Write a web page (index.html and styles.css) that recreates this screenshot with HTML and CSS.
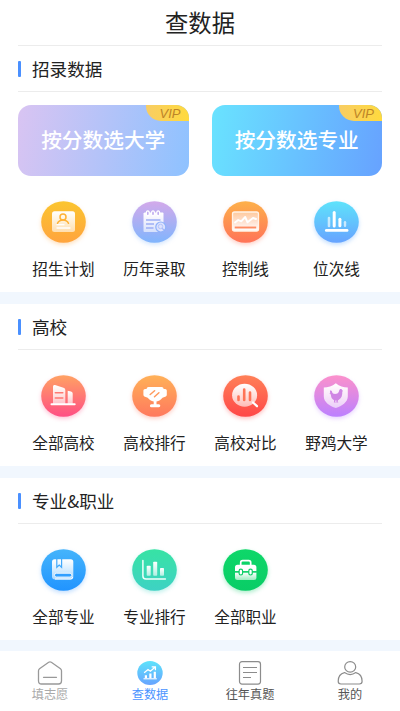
FILE: index.html
```html
<!DOCTYPE html>
<html lang="zh-CN">
<head>
<meta charset="utf-8">
<title>查数据</title>
<link rel="stylesheet" href="styles.css">
</head>
<body>
<svg class="defs" width="0" height="0" aria-hidden="true">
  <defs>
    <linearGradient id="yellow" x2="0" y2="1"><stop stop-color="#fbc52f"/><stop offset="1" stop-color="#ffa43e"/></linearGradient>
    <linearGradient id="violet" x2="0" y2="1"><stop stop-color="#d3a9ea"/><stop offset="1" stop-color="#80b5fd"/></linearGradient>
    <linearGradient id="orange" x2="0" y2="1"><stop stop-color="#fdb04a"/><stop offset="1" stop-color="#ff7358"/></linearGradient>
    <linearGradient id="sky" x2="0" y2="1"><stop stop-color="#5ee3fb"/><stop offset="1" stop-color="#67a3ff"/></linearGradient>
    <linearGradient id="pink" x2="0" y2="1"><stop stop-color="#ffa263"/><stop offset="1" stop-color="#ff4e84"/></linearGradient>
    <linearGradient id="peach" x2="0" y2="1"><stop stop-color="#ffb158"/><stop offset="1" stop-color="#ff795e"/></linearGradient>
    <linearGradient id="red" x2="0" y2="1"><stop stop-color="#ff8057"/><stop offset="1" stop-color="#ff4748"/></linearGradient>
    <linearGradient id="purple" x2="0" y2="1"><stop stop-color="#fc91cb"/><stop offset="1" stop-color="#bc80ff"/></linearGradient>
    <linearGradient id="blue" x2="0" y2="1"><stop stop-color="#45b4fb"/><stop offset="1" stop-color="#2194ff"/></linearGradient>
    <linearGradient id="teal" x2="0" y2="1"><stop stop-color="#37e3a4"/><stop offset="1" stop-color="#3ed2c4"/></linearGradient>
    <linearGradient id="green" x2="0" y2="1"><stop stop-color="#0ed769"/><stop offset="1" stop-color="#09cd66"/></linearGradient>
    <linearGradient id="glass" x2="0" y2="1"><stop stop-color="#fff"/><stop offset="1" stop-color="#fff" stop-opacity=".6"/></linearGradient>
    <linearGradient id="glassUp" x2="0" y2="1"><stop stop-color="#fff" stop-opacity=".45"/><stop offset="1" stop-color="#fff"/></linearGradient>
  </defs>
</svg>

<header class="header"><h1>查数据</h1></header>

<main>
  <section class="section">
    <h2 class="section-title">招录数据</h2>
    <div class="banners">
      <a class="banner banner-college"><span>按分数选大学</span><span class="vip">VIP</span></a>
      <a class="banner banner-major"><span>按分数选专业</span><span class="vip">VIP</span></a>
    </div>
    <div class="grid">
      <a class="item">
        <svg class="icon glow-yellow" viewBox="0 0 45 42">
          <ellipse cx="22.5" cy="21" rx="22.3" ry="20.8" fill="url(#yellow)"/>
          <rect x="11" y="10.3" width="23" height="20.7" rx="2.5" fill="url(#glass)"/>
          <g fill="none" stroke="#ffb236" stroke-width="1.5" stroke-linecap="round"><circle cx="22" cy="16" r="3"/><path d="M16.5 22.3c1-2 3-3.3 5.500-3.300s4.500 1.300 5.500 3.300"/></g>
          <path d="M16 23.700h7M16 27h13" stroke="#fff" stroke-width="1.300" stroke-linecap="round"/>
        </svg>
        <span>招生计划</span>
      </a>
      <a class="item">
        <svg class="icon glow-violet" viewBox="0 0 45 42">
          <ellipse cx="22.5" cy="21" rx="22.3" ry="20.800" fill="url(#violet)"/>
          <path d="M12.500 11.500h18a1 1 0 0 1 1 1V31h-19a1 1 0 0 1-1-1V12.500z" fill="url(#glass)"/>
          <g fill="#c1adef" stroke="#fff" stroke-width="1.200"><ellipse cx="15.800" cy="12.300" rx="1.500" ry="2.500"/><ellipse cx="21" cy="12.300" rx="1.500" ry="2.500"/><ellipse cx="26.200" cy="12.300" rx="1.500" ry="2.500"/></g>
          <path d="M14 19h14.500M14 23h8M14 27h7.500" stroke="#9daff5" stroke-width="1.400"/>
          <circle cx="28.800" cy="26" r="5" fill="#dde2fd" stroke="#8fb1fa" stroke-width="1.200"/>
          <circle cx="28.500" cy="25.500" r="2.200" fill="none" stroke="#b4c4fa"/>
          <path d="M30.200 27.300l1.600 1.600" stroke="#9bb3f8" stroke-width="1.200"/>
        </svg>
        <span>历年录取</span>
      </a>
      <a class="item">
        <svg class="icon glow-orange" viewBox="0 0 45 42">
          <ellipse cx="22.500" cy="21" rx="22.300" ry="20.800" fill="url(#orange)"/>
          <rect x="9.500" y="11" width="26" height="19" rx="2" fill="url(#glassUp)" stroke="#fff3e9" stroke-width="1.300"/>
          <path d="M12 21.500l3.200-2.500 3 1.300 4-4.300 2.300 5.300 5.500-4.300 3 1" fill="none" stroke="#fff" stroke-width="1.900" stroke-linejoin="round" stroke-linecap="round"/>
          <path d="M11.700 26.500h21.500" stroke="#ff8c62" stroke-width="1.900"/>
        </svg>
        <span>控制线</span>
      </a>
      <a class="item">
        <svg class="icon glow-blue" viewBox="0 0 45 42">
          <ellipse cx="22.500" cy="21" rx="22.300" ry="20.800" fill="url(#sky)"/>
          <g fill="none" stroke="#fff" stroke-linecap="round"><path d="M15 17v8" stroke-width="2.600" opacity=".65"/><path d="M20.200 11.500V25" stroke-width="3"/><path d="M25.900 18.300v6.500" stroke-width="3"/><path d="M31 21.300v3.500" stroke-width="2.400" opacity=".65"/><path d="M12.300 29.400h20.800" stroke-width="2.700"/></g>
        </svg>
        <span>位次线</span>
      </a>
    </div>
  </section>

  <section class="section">
    <h2 class="section-title">高校</h2>
    <div class="grid">
      <a class="item">
        <svg class="icon glow-pink" viewBox="0 0 45 42">
          <ellipse cx="22.500" cy="21" rx="22.300" ry="20.800" fill="url(#pink)"/>
          <path d="M12 29V11.500q0-2 2-1.500l8.500 2.800q1.800.600 1.800 2.200v14z" fill="url(#glass)"/>
          <path d="M26.700 29V15.800l3.300.800q1.700.400 1.700 2V29z" fill="url(#glass)"/>
          <path d="M14.300 17.700h7.500M14.300 23h7.500" stroke="#ff7a72" stroke-width="1.500" stroke-linecap="round"/>
          <path d="M10.500 29.200h23.200" stroke="#fff" stroke-width="2" stroke-linecap="round"/>
        </svg>
        <span>全部高校</span>
      </a>
      <a class="item">
        <svg class="icon glow-orange" viewBox="0 0 45 42">
          <ellipse cx="22.500" cy="21" rx="22.300" ry="20.800" fill="url(#peach)"/>
          <path d="M16.500 12h13.200q1.700 0 2 1.900h1.400q1.700 0 1.700 1.700v4.200q0 1.200-1 1.600l-3.300 1.300c-1.500 2-3.500 3.200-6 3.800v2.700h2.300a1.500 1.500 0 0 1 0 3h-7.400a1.500 1.500 0 0 1 0-3h2.300v-2.700c-2.500-.6-4.500-1.800-6-3.800l-3.300-1.300q-1-.4-1-1.600v-4.200q0-1.700 1.700-1.700h1.400q.3-1.900 2-1.900z" fill="#fff"/>
          <path d="M18.200 19.500l4.400-3.700M22.500 21.800l4.400-4" stroke="#ff9a5d" stroke-width="1.500" stroke-linecap="round"/>
        </svg>
        <span>高校排行</span>
      </a>
      <a class="item">
        <svg class="icon glow-red" viewBox="0 0 45 42">
          <ellipse cx="22.500" cy="21" rx="22.300" ry="20.800" fill="url(#red)"/>
          <ellipse cx="21.600" cy="20.200" rx="12.500" ry="11.500" fill="url(#glass)"/>
          <path d="M30 27.500l4 3.700" stroke="#fff" stroke-width="2.300" stroke-linecap="round"/>
          <path d="M15.500 21.500V25M21.200 14.500V25M27 17.500V25" stroke="#ff7457" stroke-width="2.600" stroke-linecap="round"/>
        </svg>
        <span>高校对比</span>
      </a>
      <a class="item">
        <svg class="icon glow-purple" viewBox="0 0 45 42">
          <ellipse cx="22.500" cy="21" rx="22.300" ry="20.800" fill="url(#purple)"/>
          <path d="M21.800 8.300c3.700 3 7.700 4 12 4.200v9c0 5.500-6 9.800-12 11.500-6-1.700-12-6-12-11.500v-9c4.300-.2 8.300-1.200 12-4.200z" fill="url(#glass)"/>
          <path d="M15.900 15.700c1.200-.3 2 .2 2.200 1.400.2 1.300 1.200 1.900 3 1.900 1.900 0 3-.7 3.700-2.200.4-1 .3-2 .9-2.400.9-.8 2.300-.3 2.500.9l1 .6-.9.700c.2 3.600-.7 6.700-3.400 8.200l-.9.500-.3 1.500.8.700h-2.300l.4-2.100h-1.400l.1 1.500.9.700h-2.300l.2-2.400c-2-.8-3-2.500-3.100-4.600l-.6-1.800-1-.3.8-.8z" fill="#cf86e4"/>
        </svg>
        <span>野鸡大学</span>
      </a>
    </div>
  </section>

  <section class="section">
    <h2 class="section-title">专业&amp;职业</h2>
    <div class="grid">
      <a class="item">
        <svg class="icon glow-blue" viewBox="0 0 45 42">
          <ellipse cx="22.500" cy="21" rx="22.300" ry="20.800" fill="url(#blue)"/>
          <path d="M13.500 10.300h16.300q2.500 0 2.500 2.500V28q0 2.500-2.500 2.500H14q-3 0-3-3V12.800q0-2.500 2.500-2.500z" fill="url(#glass)"/>
          <path d="M15.800 10v8.300l2.400-2.200 2.400 2.200V10" fill="none" stroke="#42a9fb" stroke-width="1.200"/>
          <rect x="13.500" y="24.300" width="17.300" height="3.700" rx="1.800" fill="#309fff" stroke="#fff" stroke-width=".800"/>
          <path d="M14 30h15.500q2 0 2.200-2" fill="none" stroke="#fff" stroke-width="1"/>
        </svg>
        <span>全部专业</span>
      </a>
      <a class="item">
        <svg class="icon glow-teal" viewBox="0 0 45 42">
          <ellipse cx="22.500" cy="21" rx="22.300" ry="20.800" fill="url(#teal)"/>
          <path d="M10.900 11.500V27q0 3 3 3h19.500" fill="none" stroke="#f0fffb" stroke-width="1.500" stroke-linecap="round"/>
          <rect x="14.700" y="16.800" width="4" height="10" rx=".8" fill="url(#glass)"/><rect x="21.200" y="12.800" width="4" height="14" rx=".8" fill="url(#glass)"/><rect x="28" y="19" width="4" height="7.800" rx=".8" fill="url(#glass)"/>
        </svg>
        <span>专业排行</span>
      </a>
      <a class="item">
        <svg class="icon glow-green" viewBox="0 0 45 42">
          <ellipse cx="22.500" cy="21" rx="22.300" ry="20.800" fill="url(#green)"/>
          <path d="M17.700 16v-2.300q0-2 2-2h6q2 0 2 2V16" fill="none" stroke="#fff" stroke-width="1.700"/>
          <path d="M14.500 15.700h16.400q2.500 0 2.500 2.500v4H12v-4q0-2.500 2.500-2.500z" fill="#fff"/>
          <path d="M12 23.500h21.400v5q0 2.500-2.500 2.500H14.500q-2.500 0-2.500-2.500z" fill="url(#glass)"/>
          <path d="M12 22.800h21.400" stroke="#0ccf67" stroke-width="1.200"/>
          <g fill="#fff" stroke="#0ccf67" stroke-width="1.200"><rect x="16.100" y="20.200" width="3.500" height="5.800" rx="1.700"/><rect x="25.800" y="20.200" width="3.500" height="5.800" rx="1.700"/></g>
        </svg>
        <span>全部职业</span>
      </a>
    </div>
  </section>
</main>

<nav class="tabs">
  <a class="tab tab-light">
    <svg class="tab-icon" viewBox="0 0 26 26"><path d="M11.700 2.300q1.300-.9 2.600 0l9.200 6.400q1 .8 1 2V21q0 3-3 3h-17q-3 0-3-3V10.700q0-1.200 1-2zM6.500 17.300h13" fill="none" stroke="#999" stroke-width="1.300" stroke-linecap="round"/></svg>
    <span>填志愿</span>
  </a>
  <a class="tab tab-active">
    <svg class="tab-icon" viewBox="0 0 26 26"><ellipse cx="13" cy="13" rx="12.700" ry="12" fill="url(#sky)"/><path d="M7.200 12.700l3.800-3.200 2.400 1.700 4.500-3.900M14.700 6.800h3.700v3.400" fill="none" stroke="#fff" stroke-width="1.300"/><path d="M8.900 15.200v3M13.400 13.500v4.700M17.800 11.700v6.500" stroke="#fff" stroke-width="2.200"/><path d="M6.500 18.800h13.300" stroke="#fff" stroke-width="1.100"/></svg>
    <span>查数据</span>
  </a>
  <a class="tab">
    <svg class="tab-icon" viewBox="0 0 26 26"><rect x="2.500" y="1.700" width="21" height="22.400" rx="2.500" fill="none" stroke="#8c8c8c" stroke-width="1.200"/><path d="M6 7.500h14M6 12.500h14M6 17.500h8" stroke="#8c8c8c" stroke-width="1.200"/></svg>
    <span>往年真题</span>
  </a>
  <a class="tab">
    <svg class="tab-icon" viewBox="0 0 26 26"><g fill="none" stroke="#8c8c8c" stroke-width="1.200"><ellipse cx="13.200" cy="6.900" rx="5.500" ry="5.300"/><path d="M7.500 12.600Q1.200 14 1.200 21.300q0 2.700 2.700 2.700h18.500q2.700 0 2.700-2.700 0-7.300-6.300-8.700-5.600 4-11.300 0z"/></g></svg>
    <span>我的</span>
  </a>
</nav>
</body>
</html>
```
FILE: styles.css
```css
* {
  box-sizing: border-box;
}

body {
  margin: 0;
  width: 400px;
  height: 711px;
  overflow: hidden;
  display: flex;
  flex-direction: column;
  background: #fff;
  color: #222;
  font-family: "Noto Sans CJK SC", sans-serif;
}

.defs {
  position: absolute;
}

.header {
  height: 46px;
  flex: none;
  margin: 0 18px;
  border-bottom: 1px solid #ececec;
  display: flex;
  justify-content: center;
}

.header h1 {
  margin: 0;
  font-size: 23.3px;
  font-weight: 400;
  line-height: 44px;
}

.section {
  padding: 0 18px;
  height: 174px;
  border-bottom: 12px solid #f1f7fe;
}

.section:first-child {
  height: 258px;
}

.section:last-child {
  height: 173px;
  border-bottom-width: 11px;
}

.section-title {
  display: flex;
  align-items: center;
  gap: 11px;
  height: 46px;
  margin: 0;
  border-bottom: 1px solid #ececec;
  font-size: 17.6px;
  font-weight: 400;
}

.section-title::before {
  content: "";
  width: 3px;
  height: 16px;
  border-radius: 1px;
  background: #4a90ff;
}

.banners {
  display: grid;
  grid-template-columns: 1fr 1fr;
  gap: 23px;
  padding-top: 13px;
}

.banner {
  position: relative;
  display: flex;
  align-items: center;
  justify-content: center;
  height: 71px;
  padding-bottom: 3px;
  border-radius: 13px;
  overflow: hidden;
  color: #fff;
  font-size: 20.7px;
  font-weight: 500;
}

.banner-college {
  background: linear-gradient(100deg, #d9c4f2, #8ec2ff);
}

.banner-major {
  background: linear-gradient(100deg, #69e3ff, #67a2ff);
}

.vip {
  position: absolute;
  top: 0;
  right: 0;
  width: 43px;
  height: 16px;
  padding-left: 6px;
  border-bottom-left-radius: 15px;
  background: linear-gradient(90deg, #f8cd64, #ffda3e);
  color: #bd8528;
  font: italic 13px/18px "Liberation Sans", sans-serif;
  text-align: center;
}

.grid {
  display: grid;
  grid-template-columns: repeat(4, 1fr);
  padding-top: 25px;
}

.item {
  display: flex;
  flex-direction: column;
  align-items: center;
  font-size: 15.6px;
  line-height: 22px;
}

.item span {
  margin-top: 14px;
}

.icon {
  width: 45px;
  height: 42px;
  overflow: visible;
}

.glow-yellow { filter: drop-shadow(0 2px 2px #ffa43e55); }
.glow-violet { filter: drop-shadow(0 2px 2px #80b5fd55); }
.glow-orange { filter: drop-shadow(0 2px 2px #ff735855); }
.glow-blue { filter: drop-shadow(0 2px 2px #4a9eff55); }
.glow-pink { filter: drop-shadow(0 2px 2px #ff4e8455); }
.glow-red { filter: drop-shadow(0 2px 2px #ff474855); }
.glow-purple { filter: drop-shadow(0 2px 2px #bc80ff55); }
.glow-teal { filter: drop-shadow(0 2px 2px #3ed2c455); }
.glow-green { filter: drop-shadow(0 2px 2px #09cd6655); }

.tabs {
  flex: 1;
  display: grid;
  grid-template-columns: repeat(4, 1fr);
  background: #fff;
}

.tab {
  display: flex;
  flex-direction: column;
  align-items: center;
  padding-top: 9px;
  color: #555;
  font-size: 12.2px;
  line-height: 16px;
}

.tab-light {
  color: #aaa;
}

.tab-active {
  color: #4a94ff;
}

.tab-icon {
  width: 26px;
  height: 26px;
}
```
